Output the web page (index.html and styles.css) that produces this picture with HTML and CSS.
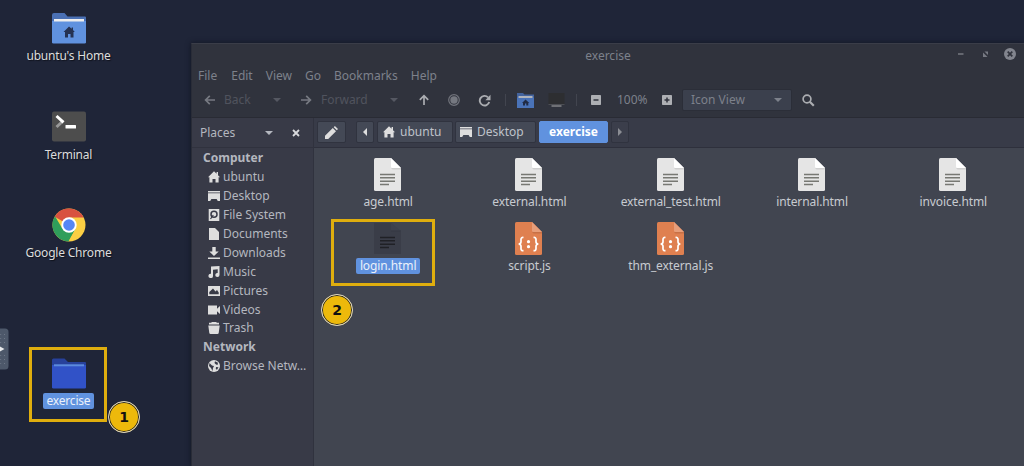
FILE: index.html
```
<!DOCTYPE html>
<html lang="en">
  <head>
    <meta charset="UTF-8" />
    <meta name="viewport" content="width=device-width, initial-scale=1.0" />
    <title>exercise</title>
    <link rel="stylesheet" href="styles.css">
  </head>
  <body>
    <!-- shared icons -->
    <svg class="defs">
      <symbol id="house" viewBox="0 0 12 12"><path d="M6 0.3 0 6.2h1.4V11.5h3.1V8h3v3.5h3.1V6.2H12L10 4.2V1H8.6v1.8z" /></symbol>
      <symbol id="screen" viewBox="0 0 12 12"><path d="M0 1h12v1.5H0zM0 3.2h12V11H9.8L8.6 9H3.4L2.2 11H0z" /></symbol>
      <symbol id="caret" viewBox="0 0 8 4"><path d="M0 0h8L4 4z" /></symbol>
      <symbol id="arrow" viewBox="0 0 12 12"><path d="M11 6H2M5.8 1.8 1.6 6l4.2 4.2" fill="none" stroke="currentColor" stroke-width="1.7" /></symbol>
      <symbol id="page" viewBox="0 0 27 33">
        <path d="M1.500 0H17l10 10v21.500q0 1.500-1.500 1.500h-24Q0 33 0 31.500v-30Q0 0 1.500 0z" fill="#e5e5e5" />
        <path d="M17 10h10v1.500H18.500z" fill="#cfcfcf" />
        <path d="M17 0 27 10h-8.500Q17 10 17 8.500z" fill="#fff" />
        <path d="M6 16.500h15M6 19.800h15M6 23.200h15M6 26.500h9" stroke="#777873" stroke-width="1.500" />
      </symbol>
      <symbol id="page-dark" viewBox="0 0 27 33">
        <path d="M0 1H17l10 9v22H0z" fill="#3a3d48" />
        <path d="M17 1 27 9H17z" fill="#3e414d" />
        <path d="M17 9h10" stroke="#353843" />
        <path d="M6 15.500h15M6 18.800h15M6 22.200h15M6 25.500h9" stroke="#202126" stroke-width="1.500" />
      </symbol>
      <symbol id="code" viewBox="0 0 27 33">
        <path d="M1.500 0H17l10 10v21.500q0 1.500-1.500 1.500h-24Q0 33 0 31.500v-30Q0 0 1.500 0z" fill="#df8050" />
        <path d="M17 10h10v1.500H18.500z" fill="#c87146" />
        <path d="M17 0 27 10h-8.500Q17 10 17 8.500z" fill="#e79e7a" />
        <path d="M8.500 15.500Q6 15.200 6 17.500v2.200q0 2-2.300 2.300 2.300.3 2.300 2.300v2.400q0 2.200 2.500 2M18.500 15.500q2.500-.3 2.500 2v2.200q0 2 2.300 2.300-2.300.3-2.300 2.300v2.400q0 2.200-2.500 2" fill="none" stroke="#fff" stroke-width="1.700" />
        <circle cx="13.500" cy="19.700" r="1.600" fill="#fff" />
        <circle cx="13.500" cy="24.700" r="1.600" fill="#fff" />
      </symbol>
    </svg>

    <div class="desktop">
      <!-- desktop icons -->
      <div class="shortcut home">
        <svg width="34" height="31" viewBox="0 0 34 31">
          <path d="M0 30V2q0-2 2-2h10.500l3 3.500H33q1 0 1 1V30z" fill="#4a70b4" />
          <path d="M0 8h34v21q0 1.500-1.500 1.500h-31Q0 30.500 0 29z" fill="#6092df" />
          <rect x="2" y="6" width="30" height="2.500" fill="#eee" />
          <path d="M17 13.500 11.500 19H13v5.500h3V21h2.500v3.500h3V19h1.300L21 17v-2.500h-1.300v1.300z" fill="#253252" />
        </svg>
        <span>ubuntu's Home</span>
      </div>
      <div class="shortcut terminal">
        <svg width="34" height="31" viewBox="0 0 34 31">
          <rect x="0" y="0.500" width="34" height="30" rx="2" fill="#4d4d4d" />
          <path d="m10.500 10.500-6 5.500" stroke="#999" stroke-width="3" />
          <path d="m4.500 5 7 6.300" stroke="#fff" stroke-width="3" />
          <rect x="13.500" y="14" width="10.500" height="3.500" rx=".5" fill="#fff" />
        </svg>
        <span>Terminal</span>
      </div>
      <div class="shortcut chrome">
        <svg width="34" height="34" viewBox="0 0 34 34">
          <circle cx="17" cy="17" r="16.500" fill="#fbcf44" />
          <path d="M17 17 2.700 8.750A16.500 16.500 0 0 1 31.700 9.500H17z" fill="#d85140" />
          <path d="M3 8.300A16.500 16.500 0 0 0 16.500 33.500L23.500 21 17 17l-7 3z" fill="#2f9e5b" />
          <path d="M16.500 33.500 23.500 21l3-7 4 0z" fill="#fbcf44" />
          <circle cx="17" cy="17" r="7.700" fill="#fff" />
          <circle cx="17" cy="17" r="5.800" fill="#5686f5" />
        </svg>
        <span>Google Chrome</span>
      </div>
      <div class="shortcut folder">
        <svg width="34" height="31" viewBox="0 0 34 31">
          <path d="M0 30V2q0-1.500 1.500-1.500h11L16 4h17q1 0 1 1v25z" fill="#27419b" />
          <path d="M0 7h34v22q0 1.500-1.500 1.500h-31Q0 30.500 0 29z" fill="#3152c7" />
          <path d="M2 7.300h30" stroke="#5c8bdd" stroke-width="2" />
        </svg>
        <span class="selected">exercise</span>
      </div>
      <div class="frame frame1"></div>
      <div class="badge badge1">1</div>
      <svg class="handle" width="9" height="42" viewBox="0 0 9 42">
        <path d="M0 .5h5Q8.500.5 8.500 4v34q0 3.500-3.500 3.500H0z" fill="#4d586a" />
        <path d="M.7 6v11M4.500 6v11M.7 27v11M4.500 27v11" stroke="#6d7786" stroke-dasharray="1 3" />
        <path d="M0 18.500 4.500 21 0 23.500z" fill="#e8eaec" />
      </svg>

      <!-- file manager window -->
      <div class="window">
        <div class="titlebar">
          <span class="title">exercise</span>
          <svg class="controls" width="60" height="14" viewBox="0 0 60 14">
            <path d="M1 7h5.500" stroke="#81848c" stroke-width="1.300" />
            <path d="M26 5.500V10h4.500zM27.500 4.500H31V8z" fill="#777a83" />
            <circle cx="53" cy="7" r="6" fill="#82858e" />
            <path d="m50.700 4.700 4.600 4.600m0-4.600-4.600 4.600" stroke="#30333d" stroke-width="1.700" />
          </svg>
        </div>
        <div class="menubar">
          <span>File</span><span>Edit</span><span>View</span><span>Go</span><span>Bookmarks</span><span>Help</span>
        </div>
        <div class="toolbar">
          <svg class="dim" width="12" height="12"><use href="#arrow" /></svg>
          <span class="back">Back</span>
          <svg class="faint" width="8" height="4"><use href="#caret" /></svg>
          <svg class="dim next" width="12" height="12"><use href="#arrow" /></svg>
          <span class="forward">Forward</span>
          <svg class="faint" width="8" height="4"><use href="#caret" /></svg>
          <svg class="up" width="12" height="12"><use href="#arrow" /></svg>
          <svg class="stop" width="12" height="12" viewBox="0 0 12 12"><circle cx="6" cy="6" r="5.300" fill="none" stroke="#70737b" stroke-width="1.200" /><circle cx="6" cy="6" r="3.700" fill="#757880" /></svg>
          <svg class="reload" width="13" height="13" viewBox="0 0 13 13"><path d="M10 3.300A4.800 4.800 0 1 0 11.200 8" fill="none" stroke="#abadb1" stroke-width="1.900" /><path d="M12.500.8v5.400H7.300z" fill="#abadb1" /></svg>
          <i class="sep"></i>
          <svg class="mini" width="17" height="15" viewBox="0 0 17 15"><path d="M0 15V0h6l1.500 1.500H17V15z" fill="#43639d" /><path d="M0 4.500h17V15H0z" fill="#4a73b8" /><path d="M1.500 4h14" stroke="#b0b4bc" stroke-width="2" /><path d="M8.500 6.500 5 10h1v2.500h2v-2h1.300v2h2V10h1z" fill="#202b45" /></svg>
          <svg class="computer" width="17" height="15" viewBox="0 0 17 15"><path d="M.5 0h16v11H.5z" fill="#2d2e31" /><path d="M.5 11.500h16" stroke="#4c4e54" /><path d="M3.500 13h10" stroke="#858689" stroke-width="1.500" /></svg>
          <i class="sep sep2"></i>
          <svg class="minus" width="10" height="10" viewBox="0 0 10 10"><rect width="10" height="10" rx=".7" fill="#adafb3" /><path d="M2.500 5h5" stroke="#30333d" stroke-width="1.500" /></svg>
          <span class="zoom">100%</span>
          <svg width="10" height="10" viewBox="0 0 10 10"><rect width="10" height="10" rx=".7" fill="#adafb3" /><path d="M2.500 5h5M5 2.500v5" stroke="#30333d" stroke-width="1.500" /></svg>
          <div class="select"><span>Icon View</span><svg width="8" height="4"><use href="#caret" /></svg></div>
          <svg width="13" height="13" viewBox="0 0 13 13"><circle cx="5" cy="5" r="3.900" fill="none" stroke="#abadb1" stroke-width="1.700" /><path d="m7.800 7.800 4 4" stroke="#abadb1" stroke-width="2.200" /></svg>
        </div>

        <div class="content">
          <div class="sidebar">
            <div class="places">
              <span>Places</span>
              <svg width="8" height="4"><use href="#caret" /></svg>
              <svg class="close" width="8" height="8" viewBox="0 0 8 8"><path d="m1 1 6 6m0-6L1 7" stroke="#d9dadd" stroke-width="1.800" /></svg>
            </div>
            <ul>
              <li class="group">Computer</li>
              <li><svg viewBox="0 0 12 12"><use href="#house" /></svg>ubuntu</li>
              <li><svg viewBox="0 0 12 12"><use href="#screen" /></svg>Desktop</li>
              <li><svg viewBox="0 0 12 12"><path d="M.7 0h10.600v12H.7z" /><circle cx="6" cy="5.200" r="3" fill="none" stroke="#383a47" stroke-width="1.500" /><path d="m2.500 10 2.800-4" stroke="#383a47" stroke-width="1.200" /></svg>File System</li>
              <li><svg viewBox="0 0 12 12"><path d="M1 0h6l4 4v8H1z" /></svg>Documents</li>
              <li><svg viewBox="0 0 12 12"><path d="M4.300 0h3.400v4.500h3L6 9 1.300 4.500h3zM0 10.400h12V12H0z" /></svg>Downloads</li>
              <li><svg viewBox="0 0 12 12"><path d="M3 .5 11.500 0v9a2.100 2 0 1 1-1.800-2V3.300L5 3.700v6.200a2.300 2.200 0 1 1-2-2.200z" /></svg>Music</li>
              <li><svg viewBox="0 0 12 12"><path fill-rule="evenodd" d="M0 1h12v10H0zM1.300 9.300h9.400V7.500L9 5 7.500 6.500 5 3.500 1.300 7z" /></svg>Pictures</li>
              <li><svg viewBox="0 0 12 12"><path d="M0 1.500h9v3.200L12 2v8L9 7.300v3.200H0z" /></svg>Videos</li>
              <li><svg viewBox="0 0 12 12"><path d="M3.500 0h5v.8H11v1.700H1V.8h2.500zM.3 3.500h11.400L10.700 11q-.2 1-1.200 1h-7q-1 0-1.200-1z" /></svg>Trash</li>
              <li class="group">Network</li>
              <li><svg viewBox="0 0 12 12"><circle cx="6" cy="6" r="6" /><path d="M1.500 3 4 5.500 6 6 5 8l-.5 3L3 8 1 6zM7 1.300l3 1.500L9.500 5 8 4.500 6.500 3zM8 7l2.500.3L9 9.800 7.800 9z" fill="#383a47" /></svg>Browse Netw…</li>
            </ul>
          </div>

          <div class="main">
            <div class="pathbar">
              <div class="crumb edit"><svg width="13" height="13" viewBox="0 0 13 13"><path d="M0 13v-3.200L7.800 2 11 5.200 3.200 13zM8.700 1.200 9.900 0 13 3.100l-1.200 1.200z" /></svg></div>
              <div class="crumb prev"><svg width="5" height="8" viewBox="0 0 5 8"><path d="M5 0v8L1 4z" /></svg></div>
              <div class="crumb c1"><svg width="12" height="12"><use href="#house" /></svg><span>ubuntu</span></div>
              <div class="crumb c2"><svg width="12" height="12"><use href="#screen" /></svg><span>Desktop</span></div>
              <div class="crumb current">exercise</div>
              <div class="crumb after"><svg width="5" height="8" viewBox="0 0 5 8"><path d="M0 0v8l4-4z" /></svg></div>
            </div>
            <div class="files">
              <div class="file"><svg><use href="#page" /></svg><span>age.html</span></div>
              <div class="file"><svg><use href="#page" /></svg><span>external.html</span></div>
              <div class="file"><svg><use href="#page" /></svg><span>external_test.html</span></div>
              <div class="file"><svg><use href="#page" /></svg><span>internal.html</span></div>
              <div class="file"><svg><use href="#page" /></svg><span>invoice.html</span></div>
              <div class="file"><svg><use href="#page-dark" /></svg><span class="selected">login.html</span></div>
              <div class="file"><svg><use href="#code" /></svg><span>script.js</span></div>
              <div class="file"><svg><use href="#code" /></svg><span>thm_external.js</span></div>
            </div>
          </div>
        </div>
      </div>

      <div class="frame frame2"></div>
      <div class="badge badge2">2</div>
    </div>
  </body>
</html>
```
FILE: styles.css
```
* {
  box-sizing: border-box;
}
body {
  margin: 0;
  font-family: "Noto Sans", "Open Sans", sans-serif;
  font-size: 12px;
  line-height: 16px;
  white-space: nowrap;
}
svg {
  display: block;
  flex: none;
  fill: currentColor;
}
.defs {
  position: absolute;
  width: 0;
  height: 0;
}
.desktop {
  position: relative;
  width: 1024px;
  height: 466px;
  overflow: hidden;
  background: #1f2538;
}

/* desktop icons */
.shortcut {
  position: absolute;
  left: 8px;
  width: 121px;
  display: flex;
  flex-direction: column;
  align-items: center;
  color: #dcdcdc;
  letter-spacing: -0.2px;
  text-shadow: 1px 1px 1px #10131d;
}
.shortcut span {
  margin-top: 5px;
}
.home {
  top: 13px;
}
.home span {
  margin-top: 4px;
}
.terminal {
  top: 111px;
}
.chrome {
  top: 208px;
}
.chrome span {
  margin-top: 3px;
}
.folder {
  top: 358px;
}
.selected {
  color: #eaf0fa;
  background: #6092df;
  border-radius: 2px;
  padding: 0 4px;
  text-shadow: none;
}
.shortcut .selected {
  margin-top: 4px;
}
.frame {
  position: absolute;
  border: 3px solid #dfae0e;
}
.frame1 {
  left: 29px;
  top: 347px;
  width: 78px;
  height: 75px;
}
.frame2 {
  left: 331px;
  top: 219px;
  width: 104px;
  height: 67px;
}
.badge {
  position: absolute;
  width: 32px;
  height: 32px;
  border: 1px solid #d8d5ca;
  border-radius: 50%;
  background: #edb90b;
  box-shadow: inset 0 0 0 1px #28271f;
  color: #111;
  font: bold 14px/31px "DejaVu Sans", sans-serif;
  text-align: center;
}
.badge1 {
  left: 108px;
  top: 401px;
}
.badge2 {
  left: 321px;
  top: 294px;
}
.handle {
  position: absolute;
  left: 0;
  top: 328px;
}

/* window */
.window {
  position: absolute;
  left: 191px;
  top: 43px;
  width: 833px;
  height: 423px;
  display: flex;
  flex-direction: column;
  background: #30333d;
  border-left: 1px solid #292c37;
  border-top: 1px solid #3a3d48;
  box-shadow: 0 0 5px #111522;
  color: #7d818b;
}
.titlebar {
  position: relative;
  height: 22px;
  line-height: 23px;
  text-align: center;
}
.controls {
  position: absolute;
  right: 7px;
  top: 3px;
}
.menubar {
  display: flex;
  height: 19px;
  line-height: 19px;
  padding-left: 6px;
}
.menubar span {
  margin-right: 13px;
}
.menubar span:nth-child(n + 2) {
  position: relative;
  left: 1px;
}
.toolbar {
  display: flex;
  align-items: center;
  height: 33px;
  padding: 0 0 2px 12px;
  border-bottom: 1px solid #292b34;
}
.dim {
  color: #777a82;
}
.faint {
  color: #555862;
}
.back,
.forward {
  color: #50535e;
}
.back {
  width: 49px;
  margin-left: 8px;
}
.forward {
  width: 69px;
  margin-left: 9px;
}
.next {
  margin-left: 19px;
  transform: rotate(180deg);
}
.up {
  margin-left: 20px;
  color: #abadb1;
  transform: rotate(90deg);
}
.stop {
  margin-left: 18px;
}
.reload {
  margin-left: 18px;
}
.sep {
  width: 1px;
  height: 12px;
  margin-left: 14px;
  background: #42454f;
}
.mini {
  margin-left: 11px;
}
.computer {
  margin-left: 14px;
}
.sep2 {
  margin-left: 11px;
}
.minus {
  margin-left: 14px;
}
.zoom {
  width: 45px;
  padding-left: 16px;
  margin-right: 16px;
}
.select {
  display: flex;
  align-items: center;
  justify-content: space-between;
  width: 110px;
  height: 22px;
  margin: 0 10px 0 10px;
  padding: 0 9px 0 8px;
  border: 1px solid #2b2e38;
  border-radius: 2px;
  background: #3b404d;
}
.content {
  flex: 1;
  display: flex;
}

/* sidebar */
.sidebar {
  width: 122px;
  background: #383a47;
  border-right: 1px solid #30323e;
  color: #b4b7bf;
}
.places {
  display: flex;
  align-items: center;
  height: 30px;
  border-bottom: 1px solid #30323e;
  padding-left: 8px;
}
.places span {
  width: 65px;
}
.close {
  margin-left: 19px;
}
.sidebar ul {
  list-style: none;
  margin: 0;
  padding: 1px 0 0 11px;
}
.sidebar li {
  display: flex;
  align-items: center;
  height: 18.9px;
  padding-left: 5px;
}
.sidebar li.group {
  padding-left: 0;
  font-weight: bold;
}
.sidebar li svg {
  width: 12px;
  height: 12px;
  margin-right: 3px;
  color: #dedede;
}

/* path bar and files */
.main {
  flex: 1;
  background: #414550;
}
.pathbar {
  display: flex;
  align-items: center;
  height: 30px;
  padding: 0 0 1px 3px;
  background: #383b48;
  border-bottom: 1px solid #2e303c;
}
.crumb {
  display: flex;
  align-items: center;
  height: 22px;
  border: 1px solid #30333f;
  border-radius: 2px;
  background: #444956;
  color: #bfc2c9;
}
.crumb svg {
  color: #dedede;
}
.edit {
  width: 29px;
  padding-left: 7px;
}
.prev {
  width: 18px;
  margin-left: 10px;
  padding-left: 5px;
}
.c1 {
  width: 76px;
  margin-left: 3px;
  padding-left: 5px;
}
.c2 {
  width: 81px;
  margin-left: 2px;
  padding-left: 4px;
}
.crumb span {
  margin-left: 5px;
}
.current {
  width: 69px;
  margin-left: 3px;
  justify-content: center;
  border-color: #6092df;
  background: #6092df;
  color: #fff;
  font-weight: bold;
}
.after {
  width: 18px;
  margin-left: 3px;
  padding-left: 6px;
  background: #3b3e4b;
}
.after svg {
  color: #8b8d94;
}
.files {
  display: grid;
  grid-template-columns: repeat(5, 141.3px);
  grid-auto-rows: 63.5px;
  padding: 10px 0 0 3px;
}
.file {
  display: flex;
  flex-direction: column;
  align-items: center;
  color: #c8cbd0;
  letter-spacing: -0.1px;
}
.file svg {
  width: 27px;
  height: 33px;
}
.file span {
  margin: 3px 0 0 1px;
}
```
